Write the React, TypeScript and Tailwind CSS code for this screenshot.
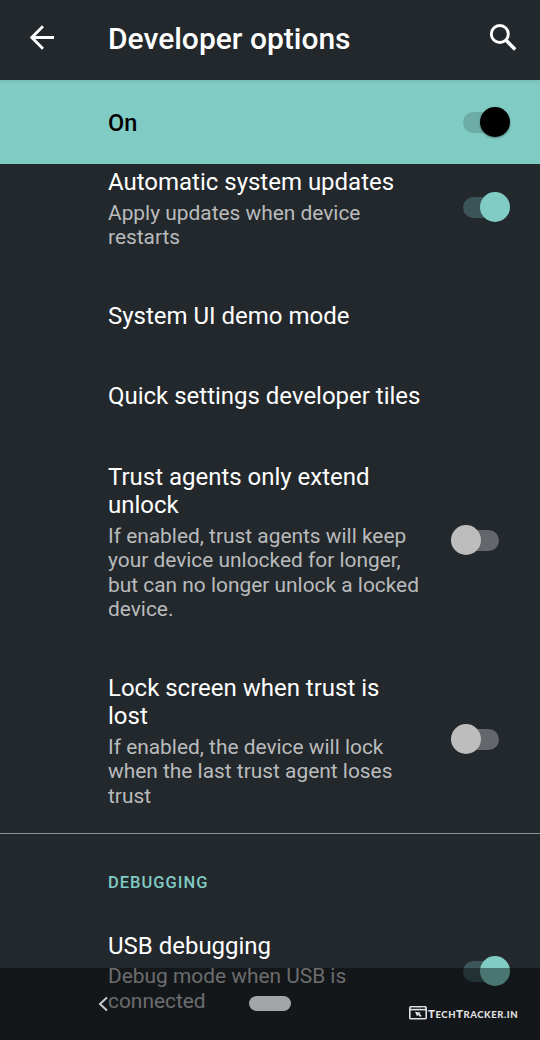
import type { ReactNode } from "react";

type SwitchTone = "master" | "on" | "off";

function Switch({ tone }: { tone: SwitchTone }) {
  const track =
    tone === "master" ? "bg-[#6dada6]" : tone === "on" ? "bg-[#3c5558]" : "bg-[#63666a]";
  const thumb =
    tone === "master"
      ? "bg-black shadow-[0_1px_2px_rgba(0,0,0,0.4)]"
      : tone === "on"
        ? "bg-[#80cbc4]"
        : "bg-[#bdbdbd]";
  const side = tone === "off" ? "justify-start" : "justify-end";
  return (
    <div className="grid h-[30px] w-[47.6px] shrink-0 items-center">
      <div className={`col-start-1 row-start-1 h-[21px] w-full rounded-full ${track}`} />
      <div className={`z-10 col-start-1 row-start-1 flex ${side}`}>
        <div className={`size-[30px] rounded-full ${thumb}`} />
      </div>
    </div>
  );
}

function Setting({
  title,
  children,
  toggle,
  className,
}: {
  title: ReactNode;
  children?: ReactNode;
  toggle?: ReactNode;
  className: string;
}) {
  return (
    <div className={`flex shrink-0 items-start pl-[108px] ${className}`}>
      <div className="grow whitespace-nowrap">
        <div className="text-[24px] leading-[28.2px] tracking-[-0.01px] text-white">{title}</div>
        {children && (
          <div className="pt-[4.8px] text-[20.9px] leading-[24.5px] text-[#b9bbbd]">{children}</div>
        )}
      </div>
      {toggle}
    </div>
  );
}

function BackArrow() {
  return (
    <svg width="26" height="26" viewBox="0 0 26 26" fill="none" stroke="white" strokeWidth="2.8">
      <path d="M24 12.5H2.2M13 1.3 1.8 12.5 13 23.7" />
    </svg>
  );
}

function SearchIcon() {
  return (
    <svg width="28" height="28" viewBox="0 0 28 28" fill="none" stroke="white" strokeWidth="2.9">
      <circle cx="10.8" cy="10" r="8.5" />
      <path d="m17 16.2 9.2 9.2" strokeWidth="3.5" />
    </svg>
  );
}

function Watermark() {
  return (
    <div className="flex items-center text-[#e2e2e2]">
      <svg width="18" height="14" viewBox="0 0 18 14" fill="none" stroke="currentColor">
        <rect x="0.8" y="0.8" width="16.4" height="12" rx="1" strokeWidth="1.6" />
        <path d="M1 3.6h16" strokeWidth="1.6" />
        <path d="M3 2.1h1.2M5.4 2.1h1.2M12.5 2.1h2.5" strokeWidth="0.8" stroke="#15181b" />
        <path d="m6 5.8 6 .9-1.5 1 2.2 2-1.3 1.2-2.2-2-1.2 1.3z" fill="currentColor" stroke="none" />
      </svg>
      <span className="pt-[3px] pl-px font-['Lato',sans-serif] text-[9.5px] leading-4 font-black tracking-[0.55px] whitespace-nowrap">
        <span className="text-[11.5px]">T</span>ECH<span className="text-[11.5px]">T</span>RACKER.IN
      </span>
    </div>
  );
}

export default function App() {
  return (
    <div className="relative flex h-[1040px] w-[540px] flex-col overflow-hidden bg-[#23282c] font-['Roboto',sans-serif]">
      <header className="flex h-20 shrink-0 items-center pr-[23px] pb-[5px] pl-[30px]">
        <BackArrow />
        <h1 className="grow pt-[3px] pl-[52px] text-[30px] leading-8 font-medium text-white">
          Developer options
        </h1>
        <SearchIcon />
      </header>

      <div className="flex h-[84px] shrink-0 items-center justify-between bg-[#80cbc4] bg-linear-to-b from-[#78bfb9] to-[#80cbc4] to-[5px] pr-[29.8px] pl-[108px]">
        <span className="pt-px text-[23.5px] leading-7 font-medium text-black">On</span>
        <Switch tone="master" />
      </div>

      <main className="flex flex-col pt-1">
        <Setting
          className="h-[133.5px] pr-[29.8px]"
          title="Automatic system updates"
          toggle={<div className="pt-[24.4px]"><Switch tone="on" /></div>}
        >
          <div className="-mt-[0.5px]">
            Apply updates when device
            <br />
            restarts
          </div>
        </Setting>
        <Setting className="h-[80.5px]" title="System UI demo mode" />
        <Setting className="h-[80.5px]" title="Quick settings developer tiles" />
        <Setting
          className="h-[211px] pr-[41px]"
          title={<>Trust agents only extend<br />unlock</>}
          toggle={<div className="pt-[62.5px]"><Switch tone="off" /></div>}
        >
          If enabled, trust agents will keep
          <br />
          your device unlocked for longer,
          <br />
          but can no longer unlock a locked
          <br />
          device.
        </Setting>
        <Setting
          className="h-[159.5px] pr-[41px]"
          title={<>Lock screen when trust is<br />lost</>}
          toggle={<div className="pt-[50.5px]"><Switch tone="off" /></div>}
        >
          If enabled, the device will lock
          <br />
          when the last trust agent loses
          <br />
          trust
        </Setting>
        <div className="h-px shrink-0 bg-[#8d9496]" />
        <h2 className="h-[98px] shrink-0 pt-[39px] pl-[108px] text-[16.5px] leading-5 font-medium tracking-[1px] text-[#80cbc4]">
          DEBUGGING
        </h2>
        <Setting
          className="h-[108px] pr-[29.8px]"
          title="USB debugging"
          toggle={<div className="pt-[24px]"><Switch tone="on" /></div>}
        >
          <div className="-mt-[0.7px]">
            Debug mode when USB is
            <br />
            connected
          </div>
        </Setting>
      </main>

      <nav className="absolute inset-x-0 bottom-0 z-20 flex h-[72px] items-start bg-black/42 pl-[98px]">
        <svg className="mt-[28px]" width="11" height="16" viewBox="0 0 11 16" fill="none" stroke="#c8c9ca" strokeWidth="2">
          <path d="M9 1.5 2 8l7 6.5" />
        </svg>
        <div className="mt-[28px] ml-[140px] h-[15px] w-[42px] rounded-full bg-[#a3a4a7]" />
        <div className="mt-[35px] ml-[118px]">
          <Watermark />
        </div>
      </nav>
    </div>
  );
}
